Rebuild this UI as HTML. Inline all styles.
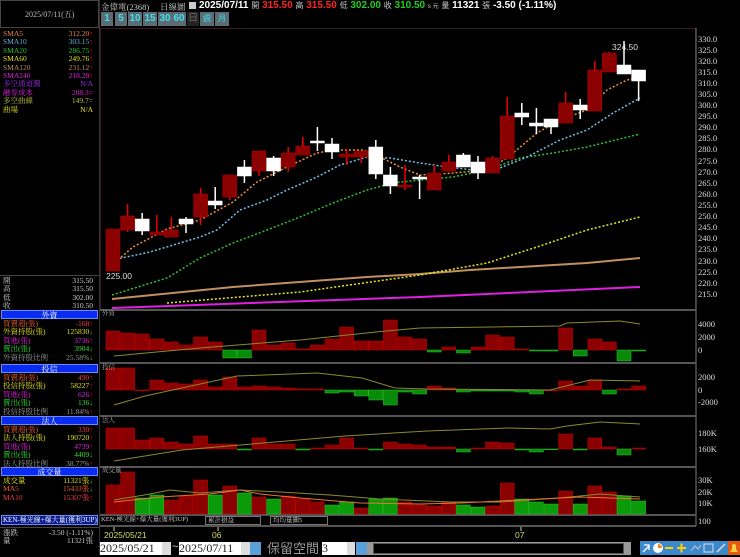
<!DOCTYPE html>
<html><head><meta charset="utf-8">
<style>
*{margin:0;padding:0;box-sizing:border-box}
body{width:740px;height:555px;background:#000;overflow:hidden;position:relative;font-family:"Liberation Sans","Noto Sans CJK TC",sans-serif;color:#ccc}
.a{position:absolute;white-space:nowrap}
.s{font-family:"Liberation Serif","Noto Serif CJK SC",serif;font-size:8px;line-height:8.4px}
.row{position:absolute;left:3px;width:94px;font-family:"Liberation Serif","Noto Serif CJK SC",serif;font-size:7.5px;height:8.4px;line-height:8.4px}
.row b{font-weight:normal;position:absolute;right:4px}
.hd{position:absolute;left:1px;width:97px;height:9px;background:#0a2cf0;color:#fff;font-size:8px;line-height:9px;text-align:center;font-family:"Liberation Serif","Noto Serif CJK SC",serif;border:1px solid #6a8af8}
.btn{position:absolute;top:12px;height:14px;background:#5d6b73;color:#3ee0f0;font-size:10px;line-height:14px;text-align:center;font-weight:bold}
.ax{position:absolute;left:698px;font-size:8.5px;color:#ddd;font-family:"Liberation Serif",serif}
</style></head><body>
<div class="a" style="left:0;top:0;width:99px;height:28px;border:1px solid #444;"></div>
<div class="a s" style="left:25px;top:11px;color:#bbb">2025/07/11(五)</div>
<div class="a" style="left:99px;top:0;width:1px;height:555px;background:#333"></div>
<div class="row" style="top:30px;color:#f08040">SMA5<b>312.20<span style="color:#f00">↑</span></b></div>
<div class="row" style="top:38.4px;color:#60b0e0">SMA10<b>303.15<span style="color:#f00">↑</span></b></div>
<div class="row" style="top:46.8px;color:#30c030">SMA20<b>286.75<span style="color:#f00">↑</span></b></div>
<div class="row" style="top:55.2px;color:#e0e020">SMA60<b>249.76<span style="color:#f00">↑</span></b></div>
<div class="row" style="top:63.6px;color:#c09060">SMA120<b>231.12<span style="color:#f00">↑</span></b></div>
<div class="row" style="top:72px;color:#e020e0">SMA240<b>218.28<span style="color:#f00">↑</span></b></div>
<div class="row" style="top:80.4px;color:#9030e0">多空通道圖<b>N/A</b></div>
<div class="row" style="top:88.8px;color:#e020e0">融券成本<b>208.3=</b></div>
<div class="row" style="top:97.2px;color:#c0c040">多空曲線<b>149.7=</b></div>
<div class="row" style="top:105.6px;color:#e0e020">曲場<b>N/A</b></div>
<div class="a" style="left:0;top:275px;width:99px;height:1px;background:#444"></div>
<div class="row" style="top:277px;color:#ccc">開<b>315.50</b></div>
<div class="row" style="top:285.4px;color:#ccc">高<b>315.50</b></div>
<div class="row" style="top:293.8px;color:#ccc">低<b>302.00</b></div>
<div class="row" style="top:302.2px;color:#ccc">收<b>310.50</b></div>
<div class="hd" style="top:310px">外資</div>
<div class="row" style="top:320px;color:#f06030">買賣超(張)<b style="color:#f04040">-168<span style="color:#f00">↑</span></b></div>
<div class="row" style="top:328.4px;color:#e0e020">外資持股(張)<b>125830<span style="color:#3c3">↓</span></b></div>
<div class="row" style="top:336.8px;color:#e020e0">買進(張)<b>3736<span style="color:#f00">↑</span></b></div>
<div class="row" style="top:345.2px;color:#30e030">賣出(張)<b>3904<span style="color:#3c3">↓</span></b></div>
<div class="row" style="top:353.6px;color:#999">外資持股比例<b>25.58%<span style="color:#3c3">↓</span></b></div>
<div class="hd" style="top:364px">投信</div>
<div class="row" style="top:374px;color:#f06030">買賣超(張)<b style="color:#f04040">490<span style="color:#f00">↑</span></b></div>
<div class="row" style="top:382.4px;color:#e0e020">投信持股(張)<b>58227<span style="color:#f00">↑</span></b></div>
<div class="row" style="top:390.8px;color:#e020e0">買進(張)<b>626<span style="color:#f00">↑</span></b></div>
<div class="row" style="top:399.2px;color:#30e030">賣出(張)<b>136<span style="color:#3c3">↓</span></b></div>
<div class="row" style="top:407.6px;color:#999">投信持股比例<b>11.84%<span style="color:#f00">↑</span></b></div>
<div class="hd" style="top:416px">法人</div>
<div class="row" style="top:426px;color:#f06030">買賣超(張)<b style="color:#f04040">330<span style="color:#f00">↑</span></b></div>
<div class="row" style="top:434.4px;color:#e0e020">法人持股(張)<b>190720<span style="color:#f00">↑</span></b></div>
<div class="row" style="top:442.8px;color:#e020e0">買進(張)<b>4739<span style="color:#f00">↑</span></b></div>
<div class="row" style="top:451.2px;color:#30e030">賣出(張)<b>4409<span style="color:#3c3">↓</span></b></div>
<div class="row" style="top:459.6px;color:#999">法人持股比例<b>38.77%<span style="color:#f00">↑</span></b></div>
<div class="hd" style="top:467px">成交量</div>
<div class="row" style="top:477px;color:#e0e020">成交量<b>11321張<span style="color:#3c3">↓</span></b></div>
<div class="row" style="top:485.4px;color:#f06030">MA5<b>15433張<span style="color:#3c3">↓</span></b></div>
<div class="row" style="top:493.8px;color:#f04040">MA10<b>15307張<span style="color:#f00">↑</span></b></div>
<div class="a" style="left:1px;top:515px;width:97px;height:10px;background:#0a1a90;border:1px solid #6a8af8;color:#fff;font-size:7px;line-height:8px;font-family:'Liberation Serif','Noto Serif CJK SC',serif;padding-left:1px;overflow:hidden">KEN-極光線+爆大量(獲利3UP)</div>
<div class="a" style="left:0;top:527px;width:99px;height:1px;background:#444"></div>
<div class="row" style="top:529px;color:#ccc">漲跌<b>-3.50 (-1.11%)</b></div>
<div class="row" style="top:537.4px;color:#ccc">量<b>11321張</b></div>

<div class="a" style="left:101px;top:1px;font-size:8.5px;color:#ccc;font-family:'Liberation Serif','Noto Serif CJK SC',serif">金偉電(2368)</div>
<div class="a" style="left:160px;top:1px;font-size:8.5px;color:#ccc;font-family:'Liberation Serif','Noto Serif CJK SC',serif">日線圖</div>
<div class="a" style="left:189px;top:2px;width:7px;height:7px;background:#ccc"></div>
<div class="a" style="left:199px;top:0;font-size:10px;font-weight:bold;color:#fff">2025/07/11 <span style="font-size:8px;font-weight:normal;color:#ccc">開</span> <span style="color:#f22">315.50</span> <span style="font-size:8px;font-weight:normal;color:#ccc">高</span> <span style="color:#f22">315.50</span> <span style="font-size:8px;font-weight:normal;color:#ccc">低</span> <span style="color:#2c2">302.00</span> <span style="font-size:8px;font-weight:normal;color:#ccc">收</span> <span style="color:#2c2">310.50</span> <span style="font-size:6px;font-weight:normal;color:#ccc">s 元</span> <span style="font-size:8px;font-weight:normal;color:#ccc">量</span> 11321 <span style="font-size:8px;font-weight:normal;color:#ccc">張</span> -3.50 (-1.11%)</div>
<div class="btn" style="left:101px;width:12px">1</div>
<div class="btn" style="left:115px;width:12px">5</div>
<div class="btn" style="left:128px;width:14px">10</div>
<div class="btn" style="left:143px;width:14px">15</div>
<div class="btn" style="left:158px;width:14px">30</div>
<div class="btn" style="left:172px;width:14px">60</div>
<div class="btn" style="left:187px;width:12px;background:#222;color:#555">日</div>
<div class="btn" style="left:200px;width:14px;font-size:8px;font-weight:normal">週</div>
<div class="btn" style="left:215px;width:14px;font-size:8px;font-weight:normal">月</div>

<svg class="a" style="left:0;top:0" width="740" height="555" id="g">
<rect x="100.5" y="28.5" width="595" height="282" fill="none" stroke="#3a1a20"/>
<g stroke="#555" stroke-width="2">
<line x1="100" y1="310" x2="696" y2="310"/><line x1="100" y1="363" x2="696" y2="363"/>
<line x1="100" y1="416" x2="696" y2="416"/><line x1="100" y1="467" x2="696" y2="467"/>
<line x1="100" y1="515" x2="696" y2="515"/><line x1="100" y1="526" x2="696" y2="526"/>
</g>
<line x1="696" y1="28" x2="696" y2="526" stroke="#555" stroke-width="1.5"/>
</svg>
<div class="ax" style="top:34px">330.0</div><div class="ax" style="top:45px">325.0</div><div class="ax" style="top:56px">320.0</div><div class="ax" style="top:67px">315.0</div><div class="ax" style="top:78px">310.0</div><div class="ax" style="top:89px">305.0</div><div class="ax" style="top:100px">300.0</div><div class="ax" style="top:111px">295.0</div><div class="ax" style="top:122px">290.0</div><div class="ax" style="top:133px">285.0</div><div class="ax" style="top:144px">280.0</div><div class="ax" style="top:156px">275.0</div><div class="ax" style="top:167px">270.0</div><div class="ax" style="top:178px">265.0</div><div class="ax" style="top:189px">260.0</div><div class="ax" style="top:200px">255.0</div><div class="ax" style="top:211px">250.0</div><div class="ax" style="top:222px">245.0</div><div class="ax" style="top:233px">240.0</div><div class="ax" style="top:244px">235.0</div><div class="ax" style="top:256px">230.0</div><div class="ax" style="top:267px">225.0</div><div class="ax" style="top:278px">220.0</div><div class="ax" style="top:289px">215.0</div>
<div class="ax" style="top:319px">4000</div><div class="ax" style="top:332px">2000</div><div class="ax" style="top:345px">0</div>
<div class="ax" style="top:372px">2000</div><div class="ax" style="top:385px">0</div><div class="ax" style="top:397px">-2000</div>
<div class="ax" style="top:428px">180K</div><div class="ax" style="top:444px">160K</div>
<div class="ax" style="top:475px">30K</div><div class="ax" style="top:487px">20K</div><div class="ax" style="top:498px">10K</div>
<div class="ax" style="top:516px">100</div>
<div class="a" style="left:612px;top:42px;font-size:8.5px;color:#ddd">324.50</div>
<div class="a" style="left:106px;top:271px;font-size:8.5px;color:#ddd">225.00</div>
<div class="a s" style="left:102px;top:310px;color:#aaa;font-size:6.5px">外資</div>
<div class="a s" style="left:102px;top:364px;color:#aaa;font-size:6.5px">投信</div>
<div class="a s" style="left:102px;top:417px;color:#aaa;font-size:6.5px">法人</div>
<div class="a s" style="left:102px;top:467px;color:#aaa;font-size:6.5px">成交量</div>
<div class="a s" style="left:101px;top:516px;color:#ccc;font-size:6.5px">KEN-極光線+爆大量(獲利3UP)</div>
<div class="a s" style="left:205px;top:516px;width:56px;height:9px;border:1px solid #777;color:#ccc;font-size:6.5px;padding-left:2px;line-height:7px">累計損益</div>
<div class="a s" style="left:270px;top:516px;width:58px;height:9px;border:1px solid #777;color:#ccc;font-size:6.5px;padding-left:2px;line-height:7px">均均量圖5</div>
<div class="a" style="left:104px;top:530px;font-size:8.5px;color:#d8d870">2025/05/21</div>
<div class="a" style="left:212px;top:530px;font-size:8.5px;color:#d8d870">06</div>
<div class="a" style="left:515px;top:530px;font-size:8.5px;color:#d8d870">07</div>
<div class="a" style="left:100px;top:542px;width:62px;height:13px;background:#fff;color:#222;font-size:12px;line-height:13px;font-family:'Liberation Serif',serif">2025/05/21</div>
<div class="a" style="left:162px;top:542px;width:9px;height:13px;background:#ddd"></div>
<div class="a" style="left:172px;top:541px;color:#ccc;font-size:11px">~</div>
<div class="a" style="left:179px;top:542px;width:62px;height:13px;background:#fff;color:#222;font-size:12px;line-height:13px;font-family:'Liberation Serif',serif">2025/07/11</div>
<div class="a" style="left:241px;top:542px;width:9px;height:13px;background:#ddd"></div>
<div class="a" style="left:250px;top:542px;width:11px;height:13px;background:#5aa0d8"></div>
<div class="a" style="left:267px;top:540px;color:#999;font-size:13px;font-family:'Noto Sans CJK TC',sans-serif;line-height:15px">保留空間</div>
<div class="a" style="left:322px;top:542px;width:25px;height:13px;background:#fff;color:#222;font-size:12px;line-height:13px;font-family:'Liberation Serif',serif">3</div>
<div class="a" style="left:347px;top:542px;width:8px;height:13px;background:#ddd"></div>
<div class="a" style="left:356px;top:542px;width:11px;height:13px;background:#5aa0d8"></div>
<div class="a" style="left:367px;top:542px;width:264px;height:13px;background:#999"></div>
<div class="a" style="left:373px;top:543px;width:251px;height:11px;background:#000;border:1px solid #555"></div>
<svg class="a" style="left:640px;top:541px" width="100" height="14">
<rect x="0" y="0" width="88" height="14" fill="#3c88cc"/>
<path d="M3 11 L9 5 M4 4 H9 V9" stroke="#fff" stroke-width="1.3" fill="none"/>
<circle cx="18" cy="7" r="5" fill="#fff"/><path d="M18 7 L18 3 A4 4 0 0 1 22 7 Z" fill="#f08020"/>
<rect x="25" y="6" width="8" height="2" fill="#ffd000"/>
<rect x="37" y="6" width="9" height="2" fill="#ffd000"/><rect x="40.5" y="2.5" width="2" height="9" fill="#ffd000"/>
<path d="M51 10 L55 5 L58 8 L61 4" stroke="#ccc" fill="none"/>
<rect x="64" y="3" width="9" height="8" stroke="#ddd" fill="none"/>
<path d="M77 11 L85 3" stroke="#ddd" stroke-width="1.5"/>
<rect x="88" y="0" width="12" height="14" fill="#e85a10"/><path d="M90 11 H98 L96 8 V5 A2 2 0 0 0 92 5 V8 Z" fill="#ffd040"/>
</svg>
<script>
const g=document.getElementById('g');
const NS='http://www.w3.org/2000/svg';
function el(t,a){const e=document.createElementNS(NS,t);for(const k in a)e.setAttribute(k,a[k]);g.appendChild(e);return e;}
const cx=i=>113+i*14.6;
const C=[[1,229,271,229,271],[1,216,230,204,232],[0,219,231,213,235],[1,232,235,215,235],[1,230,237,217,237],[0,219,224,217,233],[1,194,217,188,225],[0,201,205,187,209],[1,175,197,175,200],[0,167,176,160,183],[1,151,171,151,176],[0,158,171,156,176],[1,153,167,147,172],[1,146,155,137,155],[0,141,143,127,151],[0,144,152,138,159],[1,154,157,149,165],[1,151,157,151,163],[0,147,174,140,179],[0,175,186,167,194],[1,185,187,165,190],[0,177,179,175,199],[1,173,190,165,190],[1,162,171,155,171],[0,155,167,153,167],[0,162,173,156,179],[1,158,173,156,173],[1,116,159,97,159],[0,113,117,103,125],[0,123,126,108,134],[0,119,127,119,134],[1,103,123,92,123],[0,105,110,99,119],[1,70,111,61,111],[1,53,72,52,72],[0,65,74,41,74],[0,70,81,70,101]];
function line(pts,color,dash,w){el('polyline',{points:pts.map(p=>p.join(',')).join(' '),fill:'none',stroke:color,'stroke-width':w||1.5,'stroke-dasharray':dash||''});}
line([[112,308],[420,297],[640,287]],'#e020e0','',2);
line([[112,299],[233,287],[367,277],[420,274],[470,270],[587,263],[640,258]],'#c09060','',2);
line([[167,303],[300,292],[420,275],[487,263],[537,247],[587,230],[640,217]],'#e8e820','2,2');
line([[112,295],[167,278],[200,258],[233,243],[267,230],[300,217],[333,203],[367,190],[393,183],[420,180],[453,177],[487,170],[520,158],[553,153],[587,147],[640,134]],'#30c030','2,2');
line([[112,260],[150,252],[200,237],[217,230],[240,210],[267,200],[287,190],[317,177],[340,165],[367,157],[390,158],[420,163],[447,167],[473,170],[500,168],[527,157],[560,140],[587,130],[613,113],[640,98]],'#70c0e8','2,2');
line([[112,265],[133,247],[167,229],[200,220],[233,202],[257,182],[287,167],[317,153],[333,150],[363,150],[380,157],[400,167],[420,175],[453,173],[487,170],[507,158],[537,133],[560,120],[587,110],[607,90],[627,80],[640,77]],'#f09030','2,2');
C.forEach((c,i)=>{const x=cx(i);const col=c[0]?'#8b0000':'#fff';const wc=c[0]?'#e00':'#fff';
el('line',{x1:x,y1:c[3],x2:x,y2:c[4],stroke:wc,'stroke-width':1.5});
el('rect',{x:x-7,y:c[1],width:14,height:Math.max(2,c[2]-c[1]),fill:col,stroke:c[0]?'#b00':'#fff','stroke-width':0.5});});
function bars(z,vals){vals.forEach((v,i)=>{const x=cx(i)-7;if(v>=0)el('rect',{x:x,y:z-v,width:14,height:Math.max(v,0.8),fill:'#8b0000',stroke:'#c00','stroke-width':0.5});else el('rect',{x:x,y:z,width:14,height:-v,fill:'#0a8a0a',stroke:'#2c2','stroke-width':0.5});});}
bars(350,[19,17,16,11,8,5,13,8,-8,-8,20,5,7,1,5,11,23,9,9,30,13,11,-2,3,-3,3,15,13,1,-1,-1,22,-6,11,8,-11,-1]);
bars(390,[22,22,0,10,7,6,10,3,13,3,4,3,2,1,1,-3,-2,-6,-10,-15,-2,-4,4,2,-2,-1,-1,-1,-2,-4,0,9,4,10,-4,1,4]);
bars(449,[21,21,9,11,7,5,13,5,5,-1,11,5,5,-1,1,4,11,1,-1,7,5,4,2,2,-3,1,7,6,-1,-3,-0.6,15,-1,11,2,-6,1]);
const V=[29,42,16,19,14,18,34,19,28,21,17,15,18,15,12,9,12,6,15,16,12,9,8,12,9,7,8,31,15,12,10,23,10,28,22,18,13];
const VG=[0,0,1,1,0,0,0,1,0,1,0,1,0,0,0,1,1,0,1,1,0,0,0,0,1,1,0,0,1,1,1,0,1,0,0,1,1];
V.forEach((v,i)=>{const x=cx(i)-7;el('rect',{x:x,y:514-v,width:14,height:v,fill:VG[i]?'#0a9a0a':'#8b0000',stroke:VG[i]?'#2c2':'#c00','stroke-width':0.5});});
line([[114,356],[200,348],[300,340],[386,331],[420,328],[560,326],[567,323],[620,321],[640,324]],'#8a8a30','',1);
line([[114,405],[145,396],[237,376],[317,373],[362,378],[395,388],[427,389],[550,390],[590,380],[640,381]],'#8a8a30','',1);
line([[114,461],[182,450],[263,443],[345,436],[427,431],[508,428],[550,429],[567,426],[600,422],[640,424]],'#8a8a30','',1);
line([[114,500],[150,494],[170,490],[200,493],[240,490],[280,492],[330,495],[380,499],[450,502],[500,502],[560,498],[600,494],[640,497]],'#8a8a30','',1);
line([[114,502],[160,497],[210,494],[240,490],[260,494],[300,498],[360,503],[420,504],[460,503],[500,501],[540,499],[580,497],[640,499]],'#f07030','',1);
[114,218,521].forEach(x=>el('line',{x1:x,y1:527,x2:x,y2:531,stroke:'#d8d870'}));
</script>
</body></html>
